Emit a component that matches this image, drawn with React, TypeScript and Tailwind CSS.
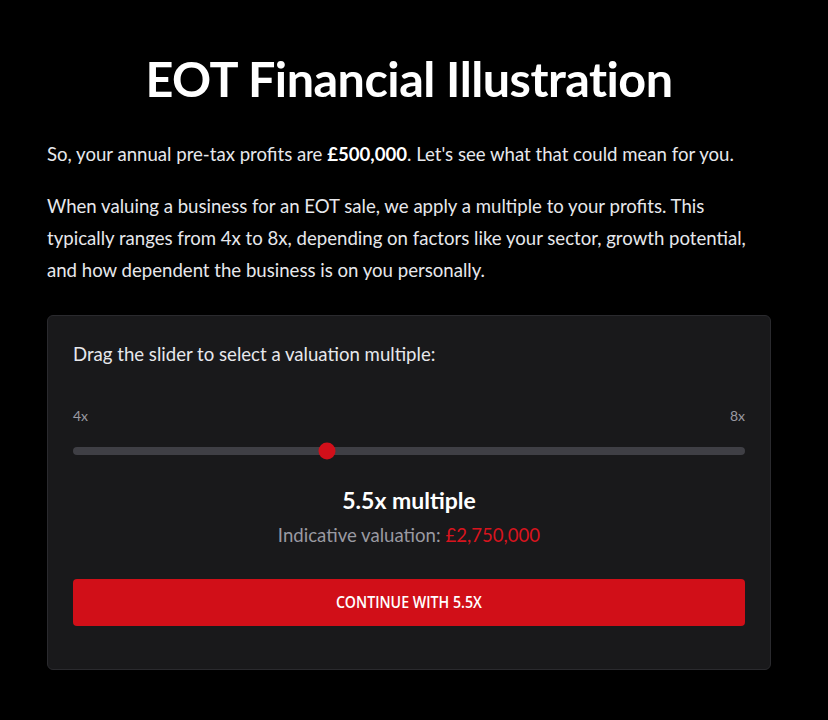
import React, { useState } from "react";

export default function App() {
  const [value, setValue] = useState(5.5);
  const frac = (value - 4) / 4;
  const valuation = (500000 * value).toLocaleString("en-GB");
  return (
    <div className="min-h-[720px] w-full bg-black text-white" style={{ fontFamily: "Lato, 'Noto Sans', sans-serif" }}>
      <div className="ml-[47px] w-[724px] pt-[48px]">
        <h1 className="text-center text-[48.5px] font-bold leading-[60px] tracking-[-0.5px] text-white">
          EOT Financial Illustration
        </h1>
        <p className="mt-[30px] text-[18.6px] leading-[32px] text-[#e7e8ec]">
          So, your annual pre-tax profits are <strong className="font-bold text-white">£500,000</strong>. Let's see what that could mean for you.
        </p>
        <p className="mt-[20px] text-[18.6px] leading-[32px] text-[#e7e8ec]">
          When valuing a business for an EOT sale, we apply a multiple to your profits. This typically ranges from 4x to 8x, depending on factors like your sector, growth potential, and how dependent the business is on you personally.
        </p>
        <div className="mt-[29px] rounded-md border border-[#2a2a2e] bg-[#19191b] px-[25px] pt-[24px] pb-[43px]">
          <p className="text-[18.6px] leading-[28px] text-[#e7e8ec]">Drag the slider to select a valuation multiple:</p>
          <div className="mt-[38px] flex justify-between text-[14px] leading-[20px] text-[#9a9aa2]">
            <span>4x</span>
            <span>8x</span>
          </div>
          <div className="relative mt-[21px] h-[8px] rounded-full bg-[#3f3f45]">
            <input
              type="range"
              min={4}
              max={8}
              step={0.5}
              value={value}
              onChange={(e) => setValue(parseFloat(e.target.value))}
              className="absolute inset-0 h-full w-full cursor-pointer opacity-0"
            />
            <div
              className="pointer-events-none absolute top-1/2 h-[17px] w-[17px] -translate-x-1/2 -translate-y-1/2 rounded-full bg-[#d10f1a]"
              style={{ left: `calc(8.5px + ${frac} * (100% - 17px))` }}
            />
          </div>
          <div className="mt-[29px] text-center text-[23px] font-bold leading-[32px] text-white">{value}x multiple</div>
          <div className="mt-[5px] text-center text-[18.6px] leading-[28px] text-[#9a9aa2]">
            Indicative valuation: <span className="text-[#d8141e]">£{valuation}</span>
          </div>
          <button className="mt-[30px] flex h-[47px] w-full items-center justify-center rounded-[4px] bg-[#d10f18] text-white">
            <span className="inline-block scale-x-[0.86] text-[16.5px] font-semibold" style={{ fontFamily: "'Open Sans', sans-serif" }}>
              CONTINUE WITH {value}X
            </span>
          </button>
        </div>
      </div>
    </div>
  );
}
